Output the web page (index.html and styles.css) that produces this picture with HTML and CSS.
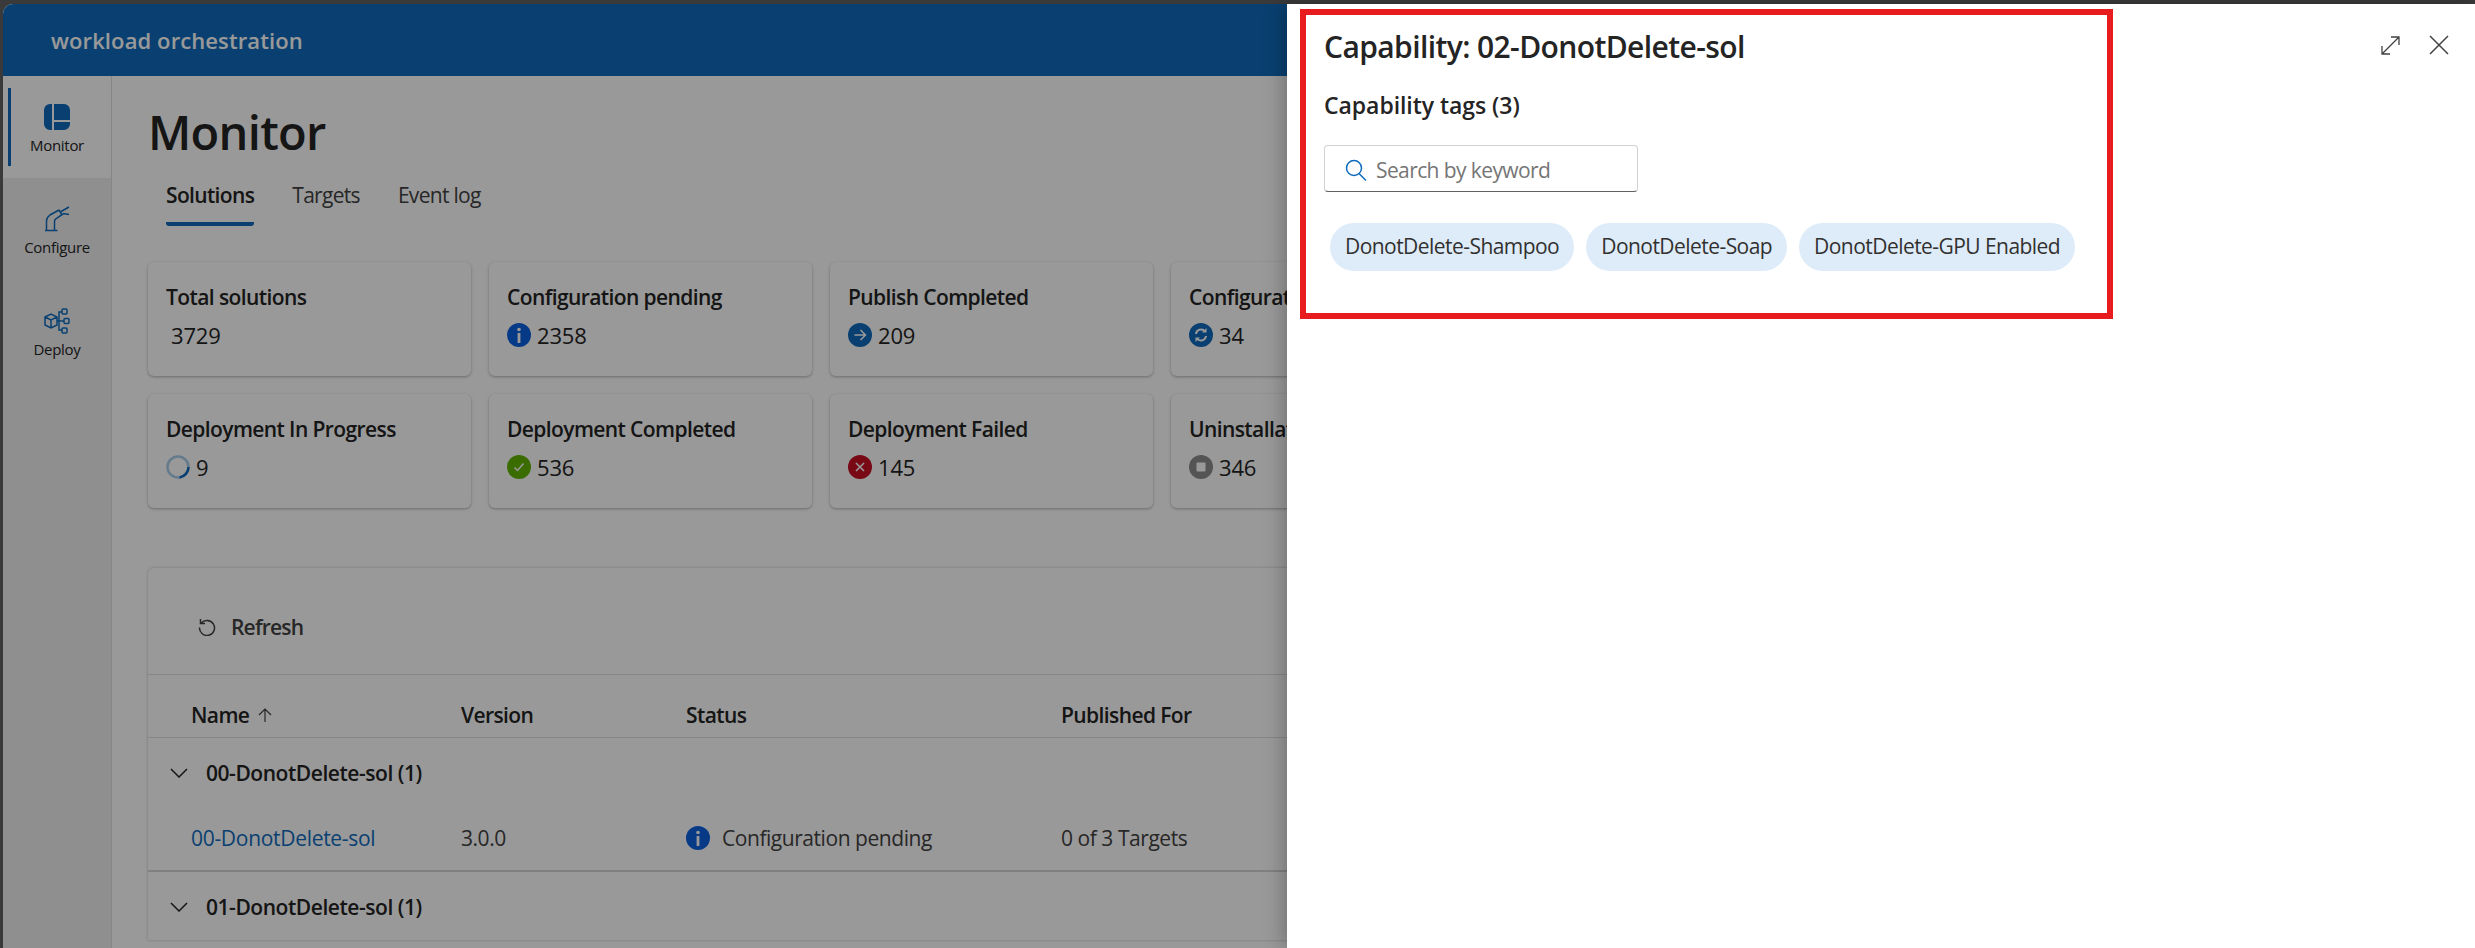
FILE: index.html
```html
<!DOCTYPE html>
<html>
<head>
<meta charset="utf-8">
<title>workload orchestration</title>
<link rel="stylesheet" href="styles.css">
</head>
<body>
<div class="screen">

<div class="app">
  <header class="topbar">workload orchestration</header>
  <div class="body">
    <nav class="sidebar">
      <a class="nav-item active">
        <svg class="nav-icon" viewBox="0 0 26 26"><path fill="#0f6cbd" d="M8 0v26H6a6 6 0 0 1-6-6V6a6 6 0 0 1 6-6zM10 0h10a6 6 0 0 1 6 6v10H10zM10 18h16v2a6 6 0 0 1-6 6H10z"/></svg>
        <span>Monitor</span>
      </a>
      <a class="nav-item">
        <svg class="nav-icon" viewBox="0 0 26 26" fill="none" stroke="#0f6cbd" stroke-width="1.500"><path d="M1 24.500h12.500M2.500 24.500V15c0-2.500 1.500-4.500 3.500-6l9-5M10.500 24.500V15.500c0-1.500.7-2.500 2-3.200L19 8M15 4l2.500 4M17 5.500L25 1M19 7.500l6 1"/></svg>
        <span>Configure</span>
      </a>
      <a class="nav-item">
        <svg class="nav-icon" viewBox="0 0 26 26" fill="none" stroke="#0f6cbd" stroke-width="1.500"><path d="M1 9l6-3 6 3v8l-6 3-6-3zM1 9l6 3 6-3M7 12v8M13 13h7M15 13V4h3M15 13v9h3"/><rect x="18" y="1" width="5" height="5" rx="1"/><rect x="20" y="10.500" width="5" height="5" rx="1"/><rect x="18" y="20" width="5" height="5" rx="1"/></svg>
        <span>Deploy</span>
      </a>
    </nav>

    <main class="main">
      <h1>Monitor</h1>
      <div class="tabs">
        <a class="tab active">Solutions</a>
        <a class="tab">Targets</a>
        <a class="tab">Event log</a>
      </div>

      <section class="cards">
        <div class="card">
          <div class="card-title">Total solutions</div>
          <div class="card-value plain">3729</div>
        </div>
        <div class="card">
          <div class="card-title">Configuration pending</div>
          <div class="card-value">
            <svg class="status" viewBox="0 0 24 24"><circle cx="12" cy="12" r="12" fill="#0c62e0"/><circle cx="12" cy="6.500" r="1.800" fill="#fff"/><rect x="10.600" y="10" width="2.800" height="10" fill="#fff"/></svg>
            2358
          </div>
        </div>
        <div class="card">
          <div class="card-title">Publish Completed</div>
          <div class="card-value">
            <svg class="status" viewBox="0 0 24 24"><circle cx="12" cy="12" r="12" fill="#0f6cbd"/><path d="M6.500 12h11M12.500 7l5 5-5 5" fill="none" stroke="#fff" stroke-width="1.500"/></svg>
            209
          </div>
        </div>
        <div class="card">
          <div class="card-title">Configuration In Progress</div>
          <div class="card-value">
            <svg class="status" viewBox="0 0 24 24"><circle cx="12" cy="12" r="12" fill="#0f6cbd"/><path d="M7 11a5 5 0 0 1 9-2.500M17 13a5 5 0 0 1-9 2.500" fill="none" stroke="#fff" stroke-width="2"/><path d="M17.500 5v4.500H13zM6.500 19v-4.500H11z" fill="#fff"/></svg>
            34
          </div>
        </div>
        <div class="card">
          <div class="card-title">Deployment In Progress</div>
          <div class="card-value">
            <svg class="status" viewBox="0 0 24 24" fill="none" stroke-width="2.500"><circle cx="12" cy="12" r="10.500" stroke="#a9cbe8"/><path d="M22.500 12a10.500 10.500 0 0 1-9 10.400" stroke="#0f6cbd"/></svg>
            9
          </div>
        </div>
        <div class="card">
          <div class="card-title">Deployment Completed</div>
          <div class="card-value">
            <svg class="status" viewBox="0 0 24 24"><circle cx="12" cy="12" r="12" fill="#62b500"/><path d="M7.500 12.500l3 3 6-7" fill="none" stroke="#fff" stroke-width="1.500"/></svg>
            536
          </div>
        </div>
        <div class="card">
          <div class="card-title">Deployment Failed</div>
          <div class="card-value">
            <svg class="status" viewBox="0 0 24 24"><circle cx="12" cy="12" r="12" fill="#c80f24"/><path d="M8 8l8 8M16 8l-8 8" fill="none" stroke="#fff" stroke-width="1.600"/></svg>
            145
          </div>
        </div>
        <div class="card">
          <div class="card-title">Uninstallation Completed</div>
          <div class="card-value">
            <svg class="status" viewBox="0 0 24 24"><circle cx="12" cy="12" r="12" fill="#8c8c8c"/><rect x="7.500" y="7.500" width="9" height="9" rx="1" fill="#fff"/></svg>
            346
          </div>
        </div>
      </section>

      <section class="table-card">
        <div class="toolbar">
          <svg class="refresh-icon" viewBox="0 0 18 18" fill="none" stroke="#424242" stroke-width="1.500"><path d="M3.200 5.200A7.500 7.500 0 1 1 1.500 9.500"/><path d="M2.500 1v4.500H7"/></svg>
          Refresh
        </div>
        <div class="row head">
          <div class="name-head">Name
            <svg class="sort" viewBox="0 0 14 14" fill="none" stroke="#424242" stroke-width="1.200"><path d="M7 14V1M1 7l6-6 6 6"/></svg>
          </div>
          <div>Version</div>
          <div>Status</div>
          <div>Published For</div>
        </div>
        <div class="group">
          <svg class="chevron" viewBox="0 0 18 10" fill="none" stroke="#242424" stroke-width="1.500"><path d="M1 1l8 8 8-8"/></svg>
          00-DonotDelete-sol (1)
        </div>
        <div class="row data">
          <a class="link">00-DonotDelete-sol</a>
          <div>3.0.0</div>
          <div class="status-cell">
            <svg class="status" viewBox="0 0 24 24"><circle cx="12" cy="12" r="12" fill="#0c62e0"/><circle cx="12" cy="6.500" r="1.800" fill="#fff"/><rect x="10.600" y="10" width="2.800" height="10" fill="#fff"/></svg>
            Configuration pending
          </div>
          <div>0 of 3 Targets</div>
        </div>
        <div class="group">
          <svg class="chevron" viewBox="0 0 18 10" fill="none" stroke="#242424" stroke-width="1.500"><path d="M1 1l8 8 8-8"/></svg>
          01-DonotDelete-sol (1)
        </div>
      </section>
    </main>
  </div>
</div>

<div class="scrim"></div>

<aside class="panel">
  <div class="panel-head">
    <h2>Capability: 02-DonotDelete-sol</h2>
    <div class="panel-actions">
      <svg class="expand" viewBox="0 0 19 19" fill="none" stroke="#424242" stroke-width="1.300"><path d="M1 18L18 1M10 1h8v8M1 10v8h8"/></svg>
      <svg class="close" viewBox="0 0 20 20" fill="none" stroke="#424242" stroke-width="1.500"><path d="M1 1l18 18M19 1L1 19"/></svg>
    </div>
  </div>
  <h3>Capability tags (3)</h3>
  <div class="search">
    <svg class="search-icon" viewBox="0 0 22 22" fill="none" stroke="#0f6cbd" stroke-width="1.500"><circle cx="9" cy="9" r="7.500"/><path d="M14 14.500l7 7"/></svg>
    <span>Search by keyword</span>
  </div>
  <div class="chips">
    <span class="chip">DonotDelete-Shampoo</span>
    <span class="chip">DonotDelete-Soap</span>
    <span class="chip">DonotDelete-GPU Enabled</span>
  </div>
  <div class="callout"></div>
</aside>

</div>
</body>
</html>
```

FILE: styles.css
```css
html, body {
   margin: 0;
   height: 100%;
   overflow: hidden;
}

body {
   font-family: "Open Sans", "Noto Sans", sans-serif;
   color: #242424;
   background-color: #3a3a3a;
}

.screen {
   position: relative;
   height: 948px;
   padding: 4px 0 0 3px;
   box-sizing: border-box;
   overflow: hidden;
}

.app {
   height: 944px;
   background-color: white;
   border-top-left-radius: 10px;
   overflow: hidden;
}

.scrim {
   position: absolute;
   left: 3px;
   right: 0;
   top: 4px;
   bottom: 0;
   border-top-left-radius: 10px;
   background-color: rgba(0, 0, 0, 0.4);
}

.topbar {
   height: 72px;
   line-height: 72px;
   padding-left: 48px;
   background-color: #0f6cbd;
   color: white;
   font-size: 22px;
   font-weight: 600;
   letter-spacing: 0.1px;
}

.body {
   display: flex;
   height: 872px;
}

/* left rail */
.sidebar {
   flex: none;
   width: 108px;
   background-color: #eeeeee;
   border-right: 1px solid #e0e0e0;
}

.nav-item {
   position: relative;
   display: flex;
   flex-direction: column;
   align-items: center;
   height: 102px;
   padding-top: 28px;
   box-sizing: border-box;
   font-size: 15px;
   letter-spacing: -0.3px;
   color: #242424;
}

.nav-item.active {
   background-color: white;
}

.nav-item.active::before {
   content: "";
   position: absolute;
   left: 5px;
   top: 12px;
   width: 3px;
   height: 78px;
   background-color: #0f6cbd;
}

.nav-icon {
   width: 26px;
   height: 26px;
   margin-bottom: 5px;
}

/* main column */
.main {
   flex: 1;
   min-width: 0;
   padding-left: 36px;
}

h1 {
   margin: 0;
   padding-top: 30px;
   font-size: 47px;
   line-height: 52px;
   font-weight: 600;
   letter-spacing: -0.7px;
}

.tabs {
   display: flex;
   gap: 38px;
   margin: 18px 0 36px 18px;
}

.tab {
   padding: 5px 0 13px;
   line-height: 28px;
   font-size: 21px;
   letter-spacing: -0.7px;
   color: #424242;
   border-bottom: 4px solid transparent;
}

.tab.active {
   font-weight: 600;
   letter-spacing: -0.65px;
   color: #242424;
   border-bottom-color: #0f6cbd;
   border-bottom-left-radius: 3px;
   border-bottom-right-radius: 3px;
}

.cards {
   display: grid;
   grid-template-columns: repeat(4, 323px);
   gap: 18px;
}

.card {
   height: 114px;
   padding: 21px 18px 0;
   box-sizing: border-box;
   background-color: white;
   border-radius: 6px;
   box-shadow: 0 1px 3px rgba(0, 0, 0, 0.3);
}

.card-title {
   line-height: 28px;
   font-size: 21px;
   font-weight: 600;
   letter-spacing: -0.6px;
}

.card-value {
   display: flex;
   align-items: center;
   gap: 6px;
   margin-top: 10px;
   line-height: 28px;
   font-size: 22px;
   letter-spacing: -0.2px;
}

.card-value.plain {
   padding-left: 5px;
}

.status {
   flex: none;
   width: 24px;
   height: 24px;
}

/* solutions table */
.table-card {
   width: 1500px;
   margin-top: 60px;
   background-color: white;
   border-radius: 6px 6px 0 0;
   box-shadow: 0 0 3px rgba(0, 0, 0, 0.25);
   font-size: 21px;
   letter-spacing: -0.45px;
}

.toolbar {
   display: flex;
   align-items: center;
   gap: 15px;
   height: 107px;
   padding: 11px 0 0 50px;
   box-sizing: border-box;
   border-bottom: 1px solid #e0e0e0;
   font-weight: 600;
   letter-spacing: -0.8px;
   color: #424242;
}

.refresh-icon {
   width: 18px;
   height: 18px;
}

.row {
   display: grid;
   grid-template-columns: 270px 225px 375px 1fr;
   align-items: center;
   padding-left: 43px;
}

.head {
   height: 63px;
   padding-top: 18px;
   box-sizing: border-box;
   border-bottom: 1px solid #e0e0e0;
   font-weight: 600;
   letter-spacing: -0.6px;
}

.name-head {
   display: flex;
   align-items: center;
   gap: 9px;
}

.sort {
   width: 14px;
   height: 14px;
}

.group {
   display: flex;
   align-items: center;
   gap: 18px;
   height: 68px;
   padding-top: 1px;
   box-sizing: border-box;
   padding-left: 22px;
   font-weight: 600;
}

.chevron {
   width: 18px;
   height: 10px;
}

.data {
   height: 66px;
   box-sizing: border-box;
   border-bottom: 2px solid #d6d6d6;
   color: #424242;
}

.link {
   color: #0f6cbd;
   letter-spacing: -0.3px;
}

.status-cell {
   display: flex;
   align-items: center;
   gap: 12px;
}

/* capability drawer */
.panel {
   position: absolute;
   top: 4px;
   right: 0;
   bottom: 0;
   width: 1188px;
   padding: 23px 26px 0 37px;
   box-sizing: border-box;
   background-color: white;
   box-shadow: -4px 0 18px rgba(0, 0, 0, 0.25);
}

.panel-head {
   display: flex;
   justify-content: space-between;
   align-items: center;
   height: 38px;
}

h2 {
   margin: 0;
   font-size: 30px;
   font-weight: 600;
   letter-spacing: -0.6px;
}

.panel-actions {
   display: flex;
   align-items: center;
   gap: 29px;
   margin-top: -2px;
}

.expand {
   width: 19px;
   height: 19px;
}

.close {
   width: 20px;
   height: 20px;
}

h3 {
   margin: 25px 0 0;
   line-height: 30px;
   font-size: 23px;
   font-weight: 600;
   letter-spacing: -0.05px;
}

.search {
   display: flex;
   align-items: center;
   gap: 9px;
   width: 314px;
   height: 47px;
   margin-top: 25px;
   padding: 2px 0 0 20px;
   box-sizing: border-box;
   border: 1px solid #d1d1d1;
   border-bottom-color: #616161;
   border-radius: 4px;
   font-size: 21px;
   letter-spacing: -0.6px;
   color: #757575;
}

.search-icon {
   width: 22px;
   height: 22px;
}

.chips {
   display: flex;
   gap: 12px;
   margin: 31px 0 0 6px;
}

.chip {
   height: 48px;
   line-height: 47px;
   padding: 0 15px;
   border-radius: 24px;
   background-color: #deecf9;
   font-size: 21px;
   letter-spacing: -0.55px;
   color: #323130;
}

/* red annotation round the top of the drawer */
.callout {
   position: absolute;
   left: 13px;
   top: 5px;
   width: 813px;
   height: 310px;
   box-sizing: border-box;
   border: 6px solid #e81c1f;
}
```
